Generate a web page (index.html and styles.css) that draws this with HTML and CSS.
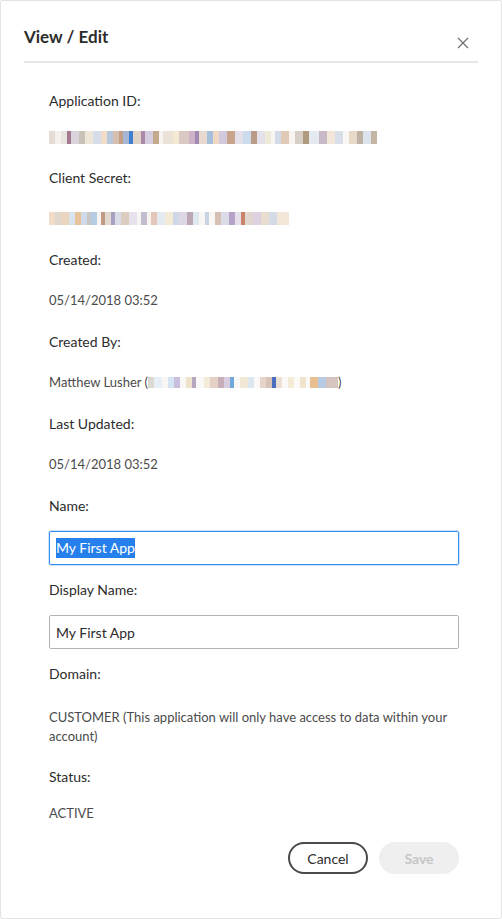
FILE: index.html
```html
<!DOCTYPE html>
<html lang="en">
<head>
<meta charset="utf-8">
<title>View / Edit</title>
<link rel="stylesheet" href="styles.css">
</head>
<body>
<div class="dialog">
  <header class="head">
    <h1 class="title">View / Edit</h1>
    <button class="close" aria-label="Close">
      <svg width="12" height="12" viewBox="0 0 12 12"><path d="M1 1 L11 11 M11 1 L1 11" stroke="#6e6e6e" stroke-width="1.2" fill="none"/></svg>
    </button>
  </header>
  <div class="divider"></div>
  <main class="body">
    <div class="field first">
      <div class="label">Application ID:</div>
      <div class="value"><span class="blur blur-id"></span></div>
    </div>
    <div class="field">
      <div class="label">Client Secret:</div>
      <div class="value"><span class="blur blur-secret"></span></div>
    </div>
    <div class="field">
      <div class="label">Created:</div>
      <div class="value">05/14/2018 03:52</div>
    </div>
    <div class="field">
      <div class="label">Created By:</div>
      <div class="value">Matthew Lusher (<span class="blur blur-mail"></span>)</div>
    </div>
    <div class="field">
      <div class="label">Last Updated:</div>
      <div class="value">05/14/2018 03:52</div>
    </div>
    <div class="field input-field">
      <div class="label">Name:</div>
      <div class="textbox focused"><span class="selected">My First App</span></div>
    </div>
    <div class="field input-field">
      <div class="label">Display Name:</div>
      <div class="textbox">My First App</div>
    </div>
    <div class="field domain">
      <div class="label">Domain:</div>
      <div class="value multi">CUSTOMER (This application will only have access to data within your account)</div>
    </div>
    <div class="field status">
      <div class="label">Status:</div>
      <div class="value">ACTIVE</div>
    </div>
    <div class="actions">
      <button class="btn cancel">Cancel</button>
      <button class="btn save" disabled>Save</button>
    </div>
  </main>
</div>
</body>
</html>
```

FILE: styles.css
```css
html, body {
  margin: 0;
  padding: 0;
  background: #fff;
}
body {
  font-family: "Lato", "Open Sans", sans-serif;
  color: #2c2c2c;
}
.dialog {
  box-sizing: border-box;
  width: 502px;
  height: 919px;
  border: 1px solid #e4e4e4;
  border-radius: 2px;
  background: #fff;
  display: flex;
  flex-direction: column;
}
.head {
  display: flex;
  align-items: flex-start;
  justify-content: space-between;
  padding: 24px 0 0 23px;
  height: 36px;
}
.title {
  margin: 0;
  font-size: 17px;
  line-height: 24px;
  font-weight: 700;
  color: #2c2c2c;
}
.close {
  border: 0;
  background: none;
  padding: 0;
  margin: 12px 32px 0 0;
  width: 12px;
  height: 12px;
  display: flex;
}
.divider {
  margin: 0 23px;
  height: 2px;
  background: #e6e6e6;
}
.body {
  display: flex;
  flex-direction: column;
  padding: 28px 42px 0 48px;
}
.field {
  display: flex;
  flex-direction: column;
  gap: 20px;
  margin-bottom: 22px;
}
.field.first {
  gap: 16px;
  margin-bottom: 21px;
}
.label {
  font-size: 14px;
  line-height: 20px;
  color: #2c2c2c;
}
.value {
  font-size: 13px;
  line-height: 20px;
  min-height: 20px;
  color: #4b4b4b;
  display: flex;
  align-items: center;
}
.value.multi {
  display: block;
  line-height: 19px;
}
.input-field {
  gap: 15px;
  margin-bottom: 15px;
}
.domain {
  gap: 24px;
  margin-bottom: 21px;
}
.status {
  gap: 16px;
  margin-bottom: 19px;
}
.textbox {
  box-sizing: border-box;
  height: 34px;
  border: 1px solid #b3b3b3;
  border-radius: 2px;
  padding: 0 6px;
  display: flex;
  align-items: center;
  font-size: 14px;
  color: #2c2c2c;
}
.textbox.focused {
  border-color: #378ef0;
  box-shadow: 0 0 0 1px rgba(55, 142, 240, 0.25);
}
.selected {
  background: #2680eb;
  color: #fff;
  line-height: 20px;
}
.blur {
  display: inline-block;
  height: 13px;
  background-size: 100% 100%;
}
.blur-id {
  width: 328px;
  background-image: linear-gradient(90deg,
    #e6dcd6 0 6px, #f4f0ee 6px 12px, #e8e3df 12px 18px, #a2798f 18px 22px, #d9d3dc 22px 30px,
    #c9c2b9 30px 36px, #eee6d8 36px 44px, #d6dde8 44px 52px, #f1dcc9 52px 58px, #b8c7db 58px 64px,
    #d5c0b0 64px 70px, #c59e86 70px 74px, #a7b6d4 74px 80px, #3f7fd0 80px 84px, #e2d3c8 84px 92px,
    #ab8aa7 92px 96px, #d4cde0 96px 104px, #c4aa8b 104px 110px, #f6f3f0 110px 114px, #ece3d8 114px 124px,
    #f4e9d2 124px 130px, #d9c9c2 130px 140px, #cdb2c8 140px 146px, #9f8ab1 146px 150px, #e7d8d0 150px 158px,
    #a6c0dc 158px 164px, #efd9c3 164px 170px, #d2c9dd 170px 178px, #c7a48b 178px 186px, #e4dfe8 186px 194px,
    #ccdcec 194px 202px, #b99b88 202px 208px, #e5e1ea 208px 216px, #f0eadb 216px 222px, #f8f6f3 222px 226px,
    #d3dbe8 226px 232px, #e0c9b6 232px 240px, #f7f4f2 240px 246px, #d8d0c6 246px 254px, #b09a7d 254px 260px,
    #e5e9f0 260px 270px, #c8b9c6 270px 278px, #f2e6d8 278px 286px, #d8dfe9 286px 294px, #f9f7f4 294px 300px,
    #e8d8c8 300px 308px, #bfb2a5 308px 314px, #dde3ec 314px 322px, #c4b6a3 322px 328px);
}
.blur-secret {
  width: 240px;
  background-image: linear-gradient(90deg,
    #f1dcc8 0 6px, #e0d8cc 6px 12px, #ead5bf 12px 20px, #d9e3ee 20px 26px, #e8c29a 26px 32px,
    #d0dae8 32px 38px, #c6c6c6 38px 42px, #b6cce4 42px 48px, #f7f4f1 48px 52px, #c09a84 52px 56px,
    #e2d9ce 56px 62px, #a8a0c0 62px 66px, #d9dde8 66px 72px, #dccdc0 72px 80px, #e7e1ee 80px 88px,
    #f7f5f2 88px 92px, #c4bdd0 92px 98px, #f6f3f1 98px 102px, #e3c6b8 102px 108px, #e5e9f0 108px 116px,
    #f4ead8 116px 124px, #cfd8e6 124px 130px, #ddd6e4 130px 138px, #bba7b6 138px 144px, #dfe7f1 144px 150px,
    #f8f6f3 150px 156px, #c8d3e3 156px 160px, #f9f7f4 160px 166px, #d6c0b4 166px 172px, #dcdce8 172px 180px,
    #b6a2c8 180px 186px, #e6e0ea 186px 192px, #c9836a 192px 196px, #e0d8cf 196px 204px, #ded2e2 204px 212px,
    #e9ddd0 212px 220px, #d4dae6 220px 228px, #f1e6d8 228px 240px);
}
.blur-mail {
  width: 190px;
  height: 11px;
  background-image: linear-gradient(90deg,
    #dcd9d2 0 6px, #e8eef5 6px 14px, #f8f7f5 14px 20px, #d4e4f2 20px 26px, #c9bedc 26px 32px,
    #f9f8f6 32px 38px, #eee4cc 38px 44px, #b7a6bf 44px 48px, #faf9f7 48px 56px, #f4ecd8 56px 62px,
    #e5d0c6 62px 70px, #c8aeb8 70px 76px, #d9cde0 76px 82px, #6fa8dc 82px 86px, #f9f8f6 86px 92px,
    #f2e8d6 92px 100px, #dde7f0 100px 106px, #faf9f7 106px 112px, #e7d5cc 112px 118px, #d9c3b8 118px 124px,
    #4a6fc0 124px 128px, #ecdfd4 128px 134px, #faf9f7 134px 140px, #f4ecd4 140px 146px, #fbfaf8 146px 152px,
    #f1e4cc 152px 158px, #faf9f7 158px 162px, #e8c090 162px 170px, #b8cbe4 170px 178px, #d6c4c0 178px 190px);
}
.actions {
  display: flex;
  justify-content: flex-end;
  gap: 11px;
  padding-right: 0;
}
.btn {
  box-sizing: border-box;
  height: 32px;
  border-radius: 16px;
  font-family: "Lato", "Open Sans", sans-serif;
  font-size: 14px;
  padding: 0;
  cursor: pointer;
}
.cancel {
  width: 80px;
  border: 2px solid #4b4b4b;
  background: #fff;
  color: #2c2c2c;
}
.save {
  width: 80px;
  border: 0;
  background: #efefef;
  color: #c6c6c6;
  font-weight: 700;
}
```
